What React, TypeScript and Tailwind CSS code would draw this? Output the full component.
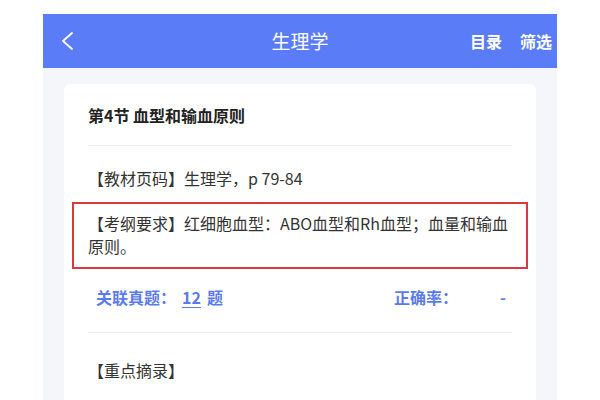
import React from "react";

export default function App() {
  return (
    <div
      className="w-[600px] h-[400px] bg-white overflow-hidden pt-[14px] px-[43px]"
      style={{ fontFamily: '"Noto Sans CJK SC", "Noto Sans", sans-serif' }}
    >
      <div className="h-full bg-[#f5f6fa] flex flex-col">
        <header className="h-[54px] shrink-0 bg-[#5b7cf7] flex items-center text-white">
          <div className="w-[110px] pl-[16px] flex items-center">
            <svg width="16" height="20" viewBox="0 0 16 20" fill="none">
              <path d="M13 2 L4 10 L13 18" stroke="white" strokeWidth="1.8" strokeLinecap="round" strokeLinejoin="round" />
            </svg>
          </div>
          <div className="flex-1 text-center text-[19px] leading-[24px]">生理学</div>
          <div className="w-[110px] flex justify-end items-center gap-[18px] pr-[5px] text-[16px] font-semibold leading-[24px]">
            <span>目录</span>
            <span>筛选</span>
          </div>
        </header>
        <main className="flex-1 px-[21px] pt-[16px] flex flex-col overflow-hidden">
          <div className="h-[340px] shrink-0 bg-white rounded-[6px] px-[24px] pt-[19px] text-[#333333]">
            <div className="text-[16px] leading-[24px] font-semibold text-[#222222]">第4节 血型和输血原则</div>
            <div className="mt-[18px] h-px bg-[#efefef]" />
            <div className="mt-[20px] text-[16px] leading-[24px]">【教材页码】生理学，p 79-84</div>
            <div className="mt-[12px] -mx-[16px] border-2 border-[#d8383f] px-[14px] pt-[8px] pb-[9px] text-[16px] leading-[23px]">
              【考纲要求】红细胞血型：ABO血型和Rh血型；血量和输血原则。
            </div>
            <div className="mt-[16px] pl-[8px] pr-[6px] flex items-center justify-between text-[16px] leading-[24px] font-semibold text-[#5a7bf0]">
              <div className="flex items-center">
                <span>关联真题：</span>
                <span className="mx-[6px] underline underline-offset-[3px]">12</span>
                <span>题</span>
              </div>
              <div className="flex items-center">
                <span>正确率：</span>
                <span className="ml-[42px]">-</span>
              </div>
            </div>
            <div className="mt-[23px] h-px bg-[#efefef]" />
            <div className="mt-[25px] text-[16px] leading-[24px]">【重点摘录】</div>
          </div>
        </main>
      </div>
    </div>
  );
}
